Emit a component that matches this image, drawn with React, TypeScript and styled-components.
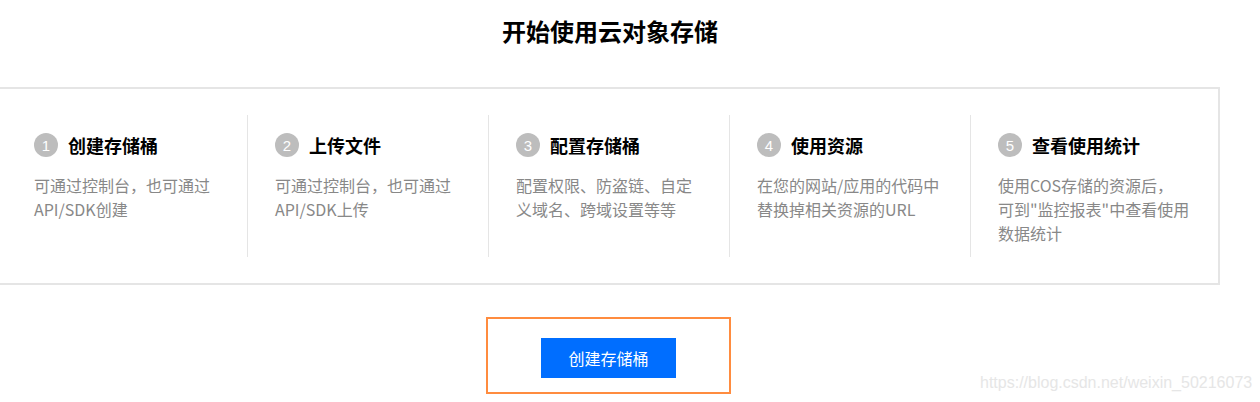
import React from 'react';
import styled, { createGlobalStyle } from 'styled-components';

const GlobalStyle = createGlobalStyle`
  html, body {
    margin: 0;
    padding: 0;
    background: #fff;
    overflow: hidden;
  }
  body {
    font-family: "Noto Sans CJK SC", "Noto Sans", sans-serif;
    color: #000;
  }
`;

const steps = [
  { title: '创建存储桶', lines: ['可通过控制台，也可通过', 'API/SDK创建'] },
  { title: '上传文件', lines: ['可通过控制台，也可通过', 'API/SDK上传'] },
  { title: '配置存储桶', lines: ['配置权限、防盗链、自定', '义域名、跨域设置等等'] },
  { title: '使用资源', lines: ['在您的网站/应用的代码中', '替换掉相关资源的URL'] },
  { title: '查看使用统计', lines: ['使用COS存储的资源后，', '可到"监控报表"中查看使用', '数据统计'] },
];

const App = () => {
  return (
    <>
      <GlobalStyle />
      <Page>
        <Title>开始使用云对象存储</Title>
        <Card>
          {steps.map((step, i) => (
            <Step key={step.title} first={i === 0}>
              <StepHead>
                <StepNumber>{i + 1}</StepNumber>
                <StepTitle>{step.title}</StepTitle>
              </StepHead>
              <StepDesc>
                {step.lines.map((line) => (
                  <div key={line}>{line}</div>
                ))}
              </StepDesc>
            </Step>
          ))}
        </Card>
        <ActionArea>
          <Highlight>
            <CreateButton>创建存储桶</CreateButton>
          </Highlight>
        </ActionArea>
      </Page>
      <Watermark>https://blog.csdn.net/weixin_50216073</Watermark>
    </>
  );
};

const Page = styled.div`
  width: 1220px;
  height: 402px;
`;

const Title = styled.h1`
  margin: 0;
  padding-top: 15px;
  height: 32px;
  line-height: 32px;
  font-size: 24px;
  font-weight: 700;
  text-align: center;
  color: #000;
`;

const Card = styled.div`
  margin-top: 40px;
  display: flex;
  border: 2px solid #e5e5e5;
  border-left: none;
  padding: 26px 0 26px 6px;
`;

const Step = styled.div<{ first?: boolean }>`
  box-sizing: border-box;
  width: 241px;
  height: 142px;
  padding-left: ${(p) => (p.first ? '28px' : '27px')};
  border-left: ${(p) => (p.first ? 'none' : '1px solid #e5e5e5')};
`;

const StepHead = styled.div`
  margin-top: 18px;
  height: 24px;
  display: flex;
  align-items: center;
  gap: 10px;
`;

const StepNumber = styled.span`
  width: 24px;
  height: 24px;
  border-radius: 50%;
  background: #bdbdbd;
  color: #fff;
  font-family: "Liberation Sans", Arial, sans-serif;
  font-size: 15px;
  display: flex;
  align-items: center;
  justify-content: center;
`;

const StepTitle = styled.span`
  font-size: 18px;
  font-weight: 700;
  color: #000;
  line-height: 24px;
`;

const StepDesc = styled.div`
  margin-top: 16px;
  font-size: 16px;
  line-height: 24px;
  color: #888;
  white-space: nowrap;
`;

const ActionArea = styled.div`
  margin-top: 32px;
  padding-right: 3px;
  display: flex;
  justify-content: center;
`;

const Highlight = styled.div`
  box-sizing: border-box;
  width: 245px;
  height: 77px;
  border: 2px solid #ff8c3f;
  padding-top: 19px;
  display: flex;
  justify-content: center;
  align-items: flex-start;
`;

const CreateButton = styled.button`
  width: 135px;
  height: 40px;
  border: none;
  background: #006eff;
  color: #fff;
  font-family: "Noto Sans CJK SC", sans-serif;
  font-size: 16px;
  cursor: pointer;
`;

const Watermark = styled.div`
  position: absolute;
  left: 980px;
  top: 373px;
  font-family: "Liberation Sans", Arial, sans-serif;
  font-size: 16px;
  line-height: 20px;
  color: #e6e6e6;
  pointer-events: none;
`;

export default App;
